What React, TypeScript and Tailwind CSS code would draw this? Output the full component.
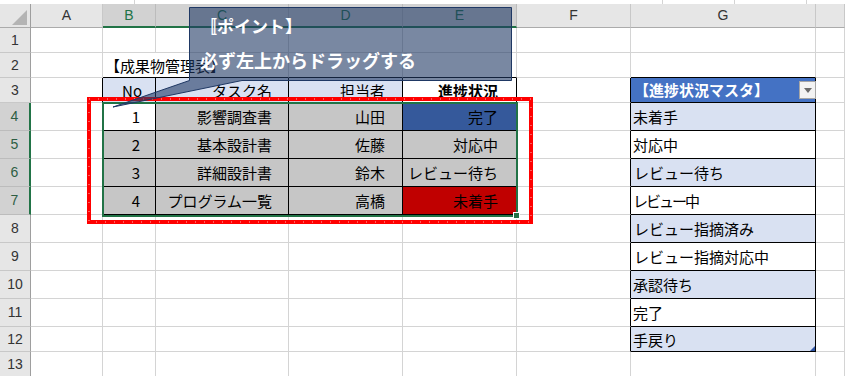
const COLS = ['A', 'B', 'C', 'D', 'E', 'F', 'G', 'H'];
const ROWS = [1, 2, 3, 4, 5, 6, 7, 8, 9, 10, 11, 12, 13];

type CellDef = { text?: string; cls?: string; noRight?: boolean };

const GRAY = 'bg-[#c6c6c6]';
const HEAD = 'bg-[#d9e1f2]';

const cells: Record<string, CellDef> = {
  B2: { text: '【成果物管理表】', cls: 'justify-start pl-[2px] overflow-visible', noRight: true },

  B3: { text: 'No', cls: `${HEAD} justify-end pr-[13px]` },
  C3: { text: 'タスク名', cls: `${HEAD} justify-end pr-[16px]` },
  D3: { text: '担当者', cls: `${HEAD} justify-end pr-[17px]` },
  E3: { text: '進捗状況', cls: 'bg-white justify-end pr-[18px] font-bold' },

  B4: { text: '1', cls: 'bg-white justify-end pr-[15px]' },
  C4: { text: '影響調査書', cls: `${GRAY} justify-end pr-[16px]` },
  D4: { text: '山田', cls: `${GRAY} justify-end pr-[17px]` },
  E4: { text: '完了', cls: 'bg-[#35599b] justify-end pr-[18px]' },

  B5: { text: '2', cls: `${GRAY} justify-end pr-[15px]` },
  C5: { text: '基本設計書', cls: `${GRAY} justify-end pr-[16px]` },
  D5: { text: '佐藤', cls: `${GRAY} justify-end pr-[17px]` },
  E5: { text: '対応中', cls: `${GRAY} justify-end pr-[18px]` },

  B6: { text: '3', cls: `${GRAY} justify-end pr-[15px]` },
  C6: { text: '詳細設計書', cls: `${GRAY} justify-end pr-[16px]` },
  D6: { text: '鈴木', cls: `${GRAY} justify-end pr-[17px]` },
  E6: { text: 'レビュー待ち', cls: `${GRAY} justify-end pr-[18px]` },

  B7: { text: '4', cls: `${GRAY} justify-end pr-[15px]` },
  C7: { text: 'プログラム一覧', cls: `${GRAY} justify-end pr-[16px]` },
  D7: { text: '高橋', cls: `${GRAY} justify-end pr-[17px]` },
  E7: { text: '未着手', cls: 'bg-[#c00000] justify-end pr-[18px]' },

  G4: { text: '未着手', cls: `${HEAD} pl-[2px]` },
  G5: { text: '対応中', cls: 'bg-white pl-[2px]' },
  G6: { text: 'レビュー待ち', cls: `${HEAD} pl-[3px]` },
  G7: { text: 'レビュー中', cls: 'bg-white pl-[2px] tracking-[-2px]' },
  G8: { text: 'レビュー指摘済み', cls: `${HEAD} pl-[3px]` },
  G9: { text: 'レビュー指摘対応中', cls: 'bg-white pl-[3px]' },
  G10: { text: '承認待ち', cls: `${HEAD} pl-[2px]` },
  G11: { text: '完了', cls: 'bg-white pl-[2px]' },
  G12: { text: '手戻り', cls: `${HEAD} pl-[2px]` },
};

// table outlines: B3:E7 and G3:G12
function inTask(c: number, r: number) {
  return c >= 1 && c <= 4 && r >= 3 && r <= 7;
}
function inMaster(c: number, r: number) {
  return c === 6 && r >= 3 && r <= 12;
}
function blackRight(c: number, r: number) {
  return inTask(c, r) || inMaster(c, r) || inTask(c + 1, r) || inMaster(c + 1, r);
}
function blackBottom(c: number, r: number) {
  return inTask(c, r) || inMaster(c, r) || inTask(c, r + 1) || inMaster(c, r + 1);
}

function Cell({ c, r }: { c: number; r: number }) {
  const key = `${COLS[c]}${r}`;
  const def = cells[key] ?? {};
  const right = def.noRight
    ? ''
    : blackRight(c, r)
      ? 'border-r border-r-black'
      : 'border-r border-r-[#d4d4d4]';
  const bottom = blackBottom(c, r) ? 'border-b border-b-black' : 'border-b border-b-[#d4d4d4]';

  if (key === 'G3') {
    return (
      <div className="relative flex items-center bg-[#4472c4] border-r border-r-black border-b border-b-black pl-[3px] text-white font-bold text-[15px] whitespace-nowrap">
        <span>【進捗状況マスタ】</span>
        <span className="ml-auto mr-[-1px] flex h-[18px] w-[17px] items-center justify-center border border-[#a6a6a6] bg-[#f3f3f3]">
          <svg width="8" height="5" viewBox="0 0 8 5">
            <path d="M0 0H8L4 5Z" fill="#6b6b6b" />
          </svg>
        </span>
      </div>
    );
  }

  return (
    <div className={`relative flex items-center whitespace-nowrap text-[15px] leading-none ${right} ${bottom} ${def.cls ?? ''}`}>
      {def.text}
      {key === 'G12' && (
        <svg className="absolute right-0 bottom-0" width="5" height="5" viewBox="0 0 5 5">
          <path d="M5 0V5H0Z" fill="#2f55a4" />
        </svg>
      )}
    </div>
  );
}

function ColHeader({ label, selected }: { label: string; selected: boolean }) {
  return (
    <div
      className={
        selected
          ? "flex items-center justify-center bg-[#d2d2d2] border-r border-r-[#bcbcbc] border-b-2 border-b-[#217346] text-[#217346] text-[14px] font-['Liberation_Sans',sans-serif]"
          : "flex items-center justify-center bg-[#e6e6e6] border-r border-r-[#c8c8c8] border-b border-b-[#ababab] text-[#333] text-[14px] font-['Liberation_Sans',sans-serif]"
      }
    >
      {label}
    </div>
  );
}

function RowHeader({ n, selected }: { n: number; selected: boolean }) {
  return (
    <div
      className={
        selected
          ? "flex items-center justify-center bg-[#d2d2d2] border-r-2 border-r-[#217346] border-b border-b-[#bcbcbc] text-[#2d5e43] text-[14px] font-['Liberation_Sans',sans-serif]"
          : "flex items-center justify-center bg-[#e6e6e6] border-r border-r-[#9e9e9e] border-b border-b-[#c8c8c8] text-[#333] text-[14px] font-['Liberation_Sans',sans-serif]"
      }
    >
      {n}
    </div>
  );
}

export default function App() {
  return (
    <div className="relative w-[845px] h-[376px] overflow-hidden bg-white text-black font-['Noto_Sans_CJK_JP',sans-serif]">
      {/* strip of the row above the sheet headers */}
      <div className="flex h-[4px]">
        <div className="w-[135px] border-r border-r-[#d4d4d4]" />
        <div className="w-[528px] border-r border-r-[#d4d4d4]" />
        <div className="w-[72px] border-r border-r-[#d4d4d4]" />
        <div className="w-[72px] border-r border-r-[#d4d4d4]" />
      </div>

      <div className="grid grid-cols-[31px_72px_53px_133px_114px_114px_114px_185px_29px] grid-rows-[24px_25px_25px_25px_28px_28px_28px_28px_28px_28px_28px_28px_25px_25px]">
        <div className="relative bg-[#e6e6e6] border-r border-r-[#9e9e9e] border-b border-b-[#ababab]">
          <svg className="absolute left-0 top-0" width="31" height="24" viewBox="0 0 31 24">
            <path d="M27 6V21H12Z" fill="#b4b4b4" />
          </svg>
        </div>
        {COLS.map((col, i) => (
          <ColHeader key={col} label={col === 'H' ? '' : col} selected={i >= 1 && i <= 4} />
        ))}

        {ROWS.map(r => [
          <RowHeader key={`h${r}`} n={r} selected={r >= 4 && r <= 7} />,
          ...COLS.map((_, c) => <Cell key={`${c}-${r}`} c={c} r={r} />),
        ])}
      </div>

      {/* selection B4:E7 */}
      <div className="absolute left-[102px] top-[102px] w-[416px] h-[115px] border-2 border-[#217346] pointer-events-none" />
      <div className="absolute left-[513px] top-[212px] w-[7px] h-[7px] bg-[#217346] border border-white" />

      {/* red frame around the data rows */}
      <svg className="absolute left-[87px] top-[97px] pointer-events-none" width="446" height="127" viewBox="0 0 446 127">
        <rect x="2" y="2" width="442" height="123" fill="none" stroke="#ff0000" strokeWidth="4" />
        <rect x="2" y="2" width="442" height="123" fill="none" stroke="#ffffff" strokeOpacity="0.7" strokeWidth="1" strokeDasharray="1 8" />
      </svg>

      {/* callout shape */}
      <svg className="absolute left-0 top-0 pointer-events-none" width="845" height="376" viewBox="0 0 845 376">
        <path
          d="M189.5 7.5H511.5V80.5H242L113 107L189.5 80.5Z"
          fill="#1f3864"
          fillOpacity="0.6"
          stroke="#1f3864"
          strokeWidth="1"
        />
      </svg>
      <div className="absolute left-[189px] top-[7px] w-[323px] h-[74px] pl-[11px] flex flex-col text-white font-bold whitespace-nowrap">
        <div className="mt-[9px] text-[17px] leading-[20px]">〚ポイント】</div>
        <div className="mt-[13px] text-[18px] leading-[22px]">必ず左上からドラッグする</div>
      </div>
    </div>
  );
}
